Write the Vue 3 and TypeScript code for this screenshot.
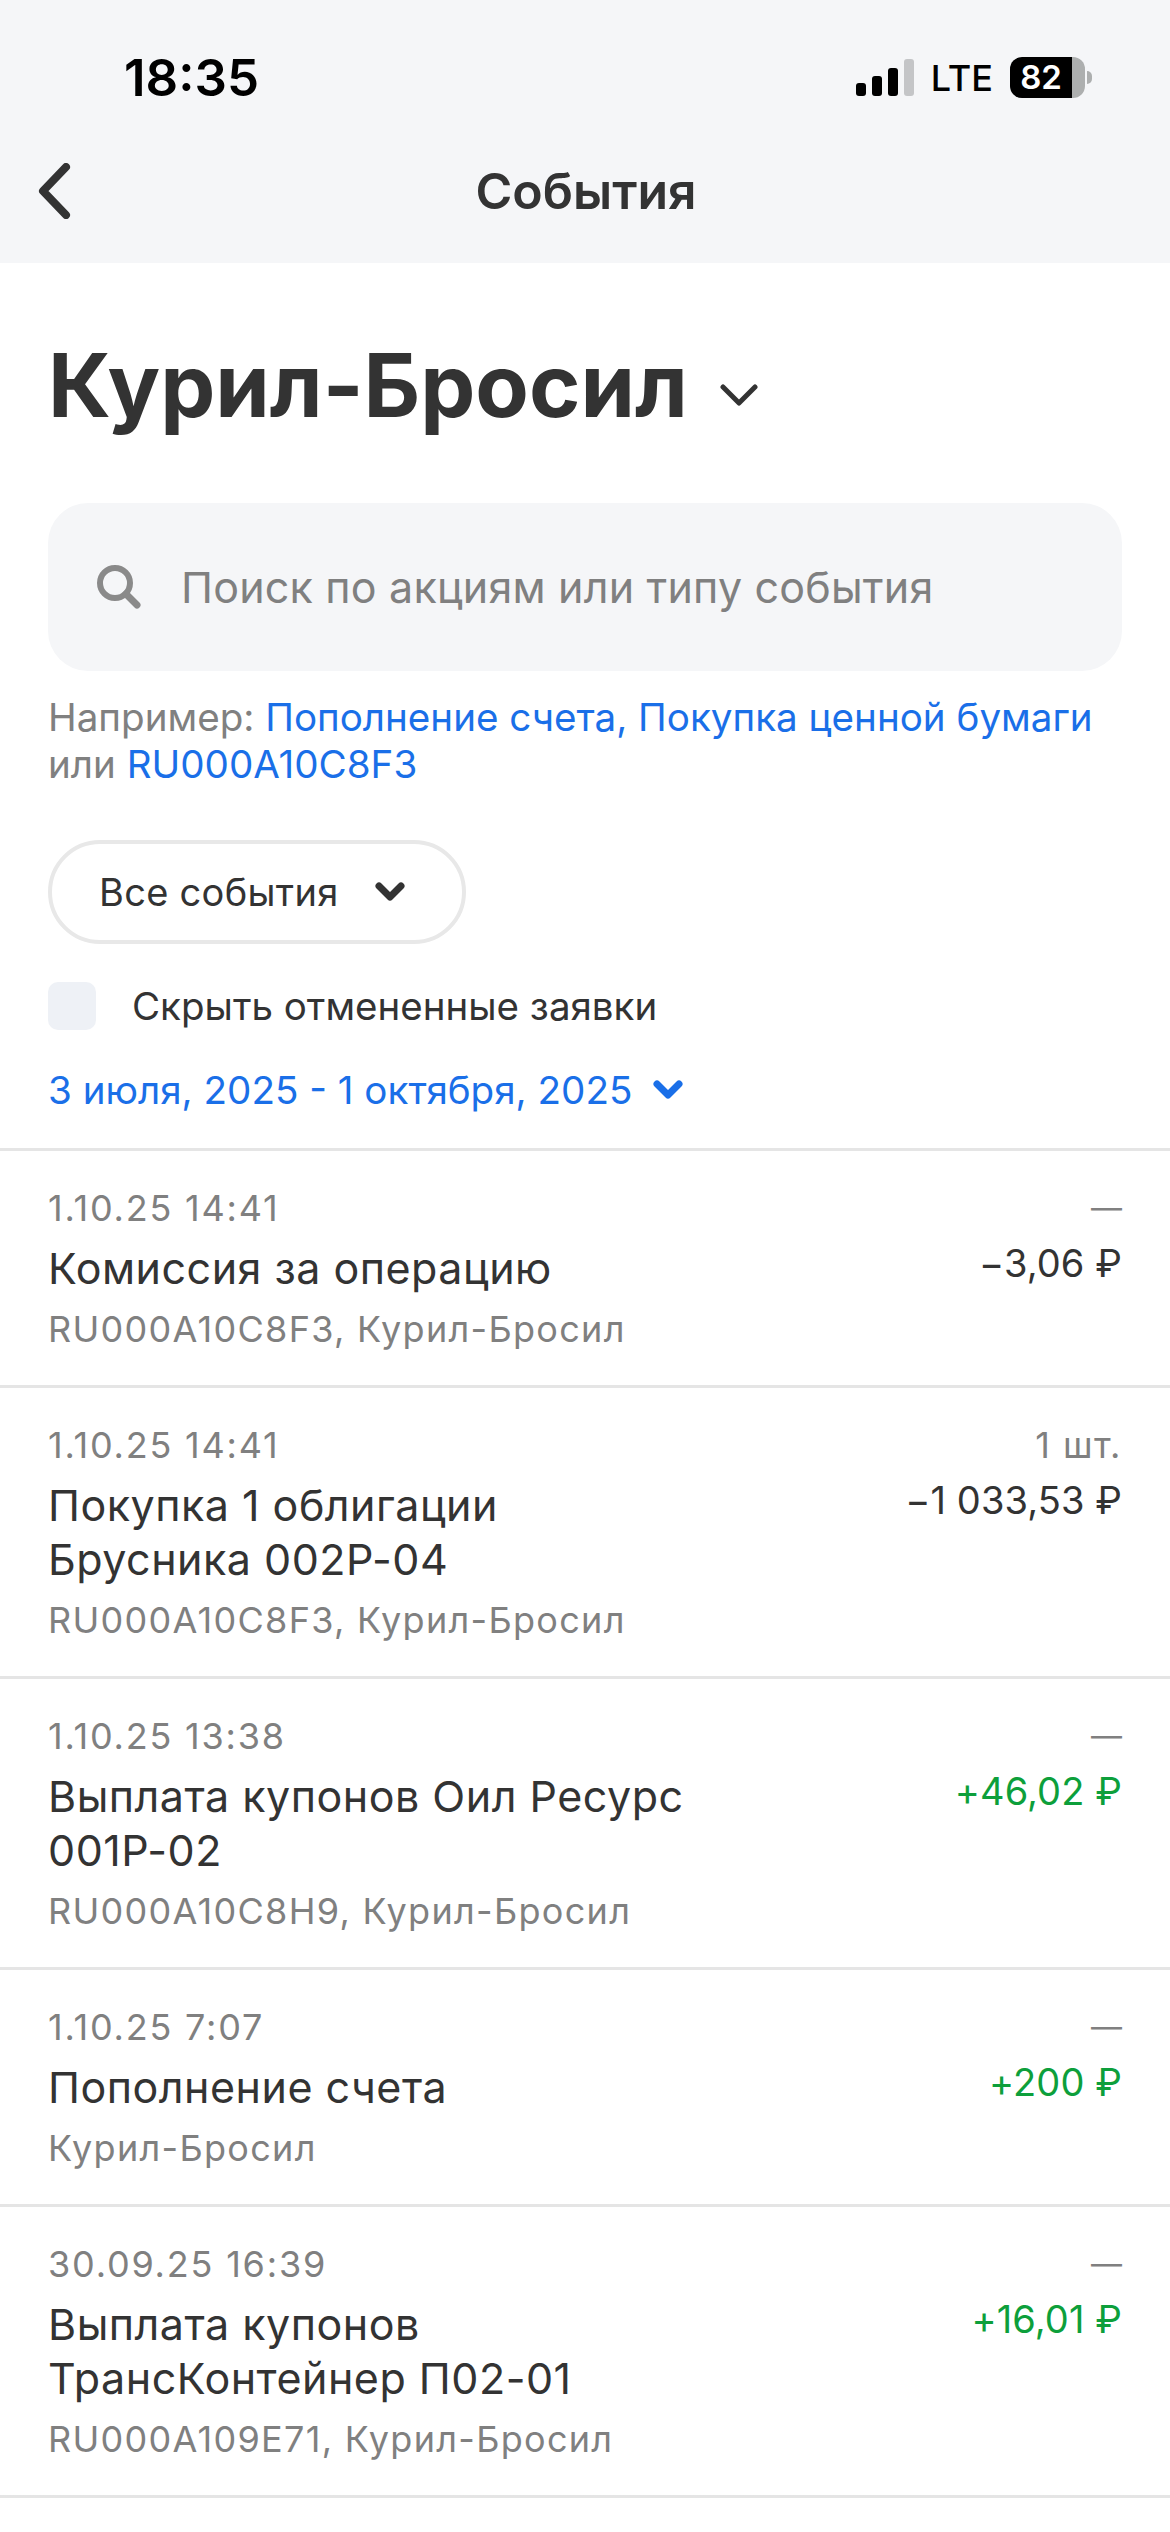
<script setup lang="ts">
interface EventRow {
  date: string;
  title: string[];
  sub: string;
  qty: string;
  amount: string;
  income: boolean;
}

const events: EventRow[] = [
  { date: "1.10.25 14:41", title: ["Комиссия за операцию"], sub: "RU000A10C8F3, Курил-Бросил", qty: "—", amount: "−3,06 ₽", income: false },
  { date: "1.10.25 14:41", title: ["Покупка 1 облигации", "Брусника 002P-04"], sub: "RU000A10C8F3, Курил-Бросил", qty: "1 шт.", amount: "−1 033,53 ₽", income: false },
  { date: "1.10.25 13:38", title: ["Выплата купонов Оил Ресурс", "001P-02"], sub: "RU000A10C8H9, Курил-Бросил", qty: "—", amount: "+46,02 ₽", income: true },
  { date: "1.10.25 7:07", title: ["Пополнение счета"], sub: "Курил-Бросил", qty: "—", amount: "+200 ₽", income: true },
  { date: "30.09.25 16:39", title: ["Выплата купонов", "ТрансКонтейнер П02-01"], sub: "RU000A109E71, Курил-Бросил", qty: "—", amount: "+16,01 ₽", income: true },
];
</script>

<template>
  <main class="page">
    <header class="top">
      <div class="status">
        <span class="time">18:35</span>
        <div class="status-right">
          <div class="signal">
            <i class="b1"></i><i class="b2"></i><i class="b3"></i><i class="b4"></i>
          </div>
          <span class="lte">LTE</span>
          <div class="battery">
            <span class="battery-body">82</span>
            <span class="battery-rest"></span>
            <span class="battery-cap"></span>
          </div>
        </div>
      </div>
      <nav class="nav">
        <svg class="back" width="36" height="56" viewBox="0 0 36 56" fill="none">
          <path d="M30 4 7 28l23 24" stroke="#333" stroke-width="8" stroke-linecap="round" stroke-linejoin="round" />
        </svg>
        <span class="nav-title">События</span>
      </nav>
    </header>

    <section class="filters">
      <div class="heading">
        <h1>Курил-Бросил</h1>
        <svg width="38" height="24" viewBox="0 0 38 24" fill="none">
          <path d="M3 4l16 16L35 4" stroke="#333" stroke-width="5" stroke-linecap="round" stroke-linejoin="round" />
        </svg>
      </div>

      <div class="search">
        <svg width="46" height="46" viewBox="0 0 46 46" fill="none">
          <circle cx="19" cy="19" r="15" stroke="#8a8a8a" stroke-width="6" />
          <path d="M30 30l11 11" stroke="#8a8a8a" stroke-width="7" stroke-linecap="round" />
        </svg>
        <span>Поиск по акциям или типу события</span>
      </div>

      <p class="hint">
        Например: <span class="link">Пополнение счета, Покупка ценной бумаги</span><br />
        или <span class="link">RU000A10C8F3</span>
      </p>

      <div class="pill">
        <span>Все события</span>
        <svg width="30" height="20" viewBox="0 0 30 20" fill="none">
          <path d="M4 4l11 11L26 4" stroke="#333" stroke-width="7" stroke-linecap="round" stroke-linejoin="round" />
        </svg>
      </div>

      <label class="check">
        <span class="box"></span>
        <span>Скрыть отмененные заявки</span>
      </label>

      <div class="dates">
        <span>3 июля, 2025 - 1 октября, 2025</span>
        <svg width="30" height="20" viewBox="0 0 30 20" fill="none">
          <path d="M4 4l11 11L26 4" stroke="#1a6fe8" stroke-width="7" stroke-linecap="round" stroke-linejoin="round" />
        </svg>
      </div>
    </section>

    <ul class="list">
      <li v-for="(ev, i) in events" :key="i" class="row">
        <div class="left">
          <div class="meta date">{{ ev.date }}</div>
          <div class="title">
            <div v-for="line in ev.title" :key="line">{{ line }}</div>
          </div>
          <div class="meta sub">{{ ev.sub }}</div>
        </div>
        <div class="right">
          <div class="meta qty" :class="{ dash: ev.qty === '—' }">{{ ev.qty }}</div>
          <div class="amount" :class="{ income: ev.income }">{{ ev.amount }}</div>
        </div>
      </li>
    </ul>
  </main>
</template>

<style>
html,
body {
  margin: 0;
  background: #fff;
}
</style>

<style scoped>
.page {
  width: 1170px;
  height: 2532px;
  overflow: hidden;
  background: #fff;
  color: #333;
  font-family: Inter, "Noto Sans", sans-serif;
}

.top {
  height: 263px;
  background: #f5f6f8;
}

.status {
  height: 155px;
  display: flex;
  justify-content: space-between;
  align-items: center;
  padding: 0 78px 0 124px;
}

.time {
  font-size: 51px;
  font-weight: 600;
  color: #000;
}

.status-right {
  display: flex;
  align-items: center;
  gap: 17px;
}

.signal {
  display: flex;
  align-items: flex-end;
  gap: 6px;
  height: 37px;
}

.signal i {
  width: 10px;
  border-radius: 3px;
  background: #000;
}

.signal .b1 { height: 13px; }
.signal .b2 { height: 20px; }
.signal .b3 { height: 28px; }
.signal .b4 { height: 37px; background: #c4c5c7; }

.lte {
  font-size: 36px;
  font-weight: 500;
  color: #000;
}

.battery {
  display: flex;
  align-items: center;
  height: 41px;
}

.battery-body {
  width: 62px;
  height: 41px;
  line-height: 41px;
  text-align: center;
  background: #000;
  color: #fff;
  font-size: 33px;
  font-weight: 600;
  border-radius: 12px 0 0 12px;
}

.battery-rest {
  width: 13px;
  height: 41px;
  background: #adafaf;
  border-radius: 0 12px 12px 0;
}

.battery-cap {
  width: 5px;
  height: 13px;
  margin-left: 2px;
  background: #adafaf;
  border-radius: 0 6px 6px 0;
}

.nav {
  position: relative;
  height: 72px;
  display: flex;
  align-items: center;
  justify-content: center;
}

.back {
  position: absolute;
  left: 36px;
  top: 8px;
}

.nav-title {
  font-size: 50px;
  font-weight: 600;
  margin-left: 2px;
}

.filters {
  padding: 0 48px;
}

.heading {
  height: 240px;
  display: flex;
  align-items: center;
  gap: 32px;
}

h1 {
  margin: 3px 0 0;
  font-size: 87.5px;
  font-weight: 700;
}

.heading svg {
  margin-top: 24px;
}

.search {
  height: 168px;
  display: flex;
  align-items: center;
  gap: 39px;
  padding-left: 48px;
  border-radius: 40px;
  background: #f5f6f8;
  color: #808080;
  font-size: 43px;
  letter-spacing: 0.2px;
}

.hint {
  margin: 23px 0 0;
  font-size: 38.6px;
  line-height: 47px;
  color: #808080;
}

.link {
  color: #1a6fe8;
}

.pill {
  margin-top: 52px;
  width: 418px;
  height: 104px;
  box-sizing: border-box;
  display: flex;
  align-items: center;
  gap: 36px;
  padding-left: 47px;
  border: 4px solid #e8e8e8;
  border-radius: 52px;
  font-size: 38px;
  letter-spacing: 0.3px;
}

.check {
  margin-top: 37px;
  height: 49px;
  display: flex;
  align-items: center;
  gap: 36px;
  font-size: 38.5px;
}

.box {
  width: 48px;
  height: 48px;
  border-radius: 10px;
  background: #eef1f6;
}

.dates {
  margin-top: 37px;
  display: flex;
  align-items: center;
  gap: 21px;
  font-size: 38.6px;
  color: #1a6fe8;
}

.list {
  list-style: none;
  margin: 35px 0 0;
  padding: 0;
  border-top: 3px solid #e5e5e5;
}

.row {
  display: flex;
  justify-content: space-between;
  padding: 35px 48px 34px;
  border-bottom: 3px solid #e5e5e5;
}

.meta {
  font-size: 36px;
  line-height: 44px;
  color: #808080;
}

.date {
  letter-spacing: 1.8px;
}

.sub {
  margin-top: 12px;
  letter-spacing: 1.3px;
}

.title {
  margin-top: 11px;
  font-size: 43px;
  line-height: 54px;
  letter-spacing: 0.5px;
}

.right {
  text-align: right;
}

.qty {
  letter-spacing: 1.5px;
}

.qty.dash {
  font-size: 31px;
  letter-spacing: 0;
}

.amount {
  margin-top: 6px;
  font-size: 38px;
  line-height: 54px;
  letter-spacing: 0.1px;
}

.income {
  color: #0d9f3b;
}
</style>
